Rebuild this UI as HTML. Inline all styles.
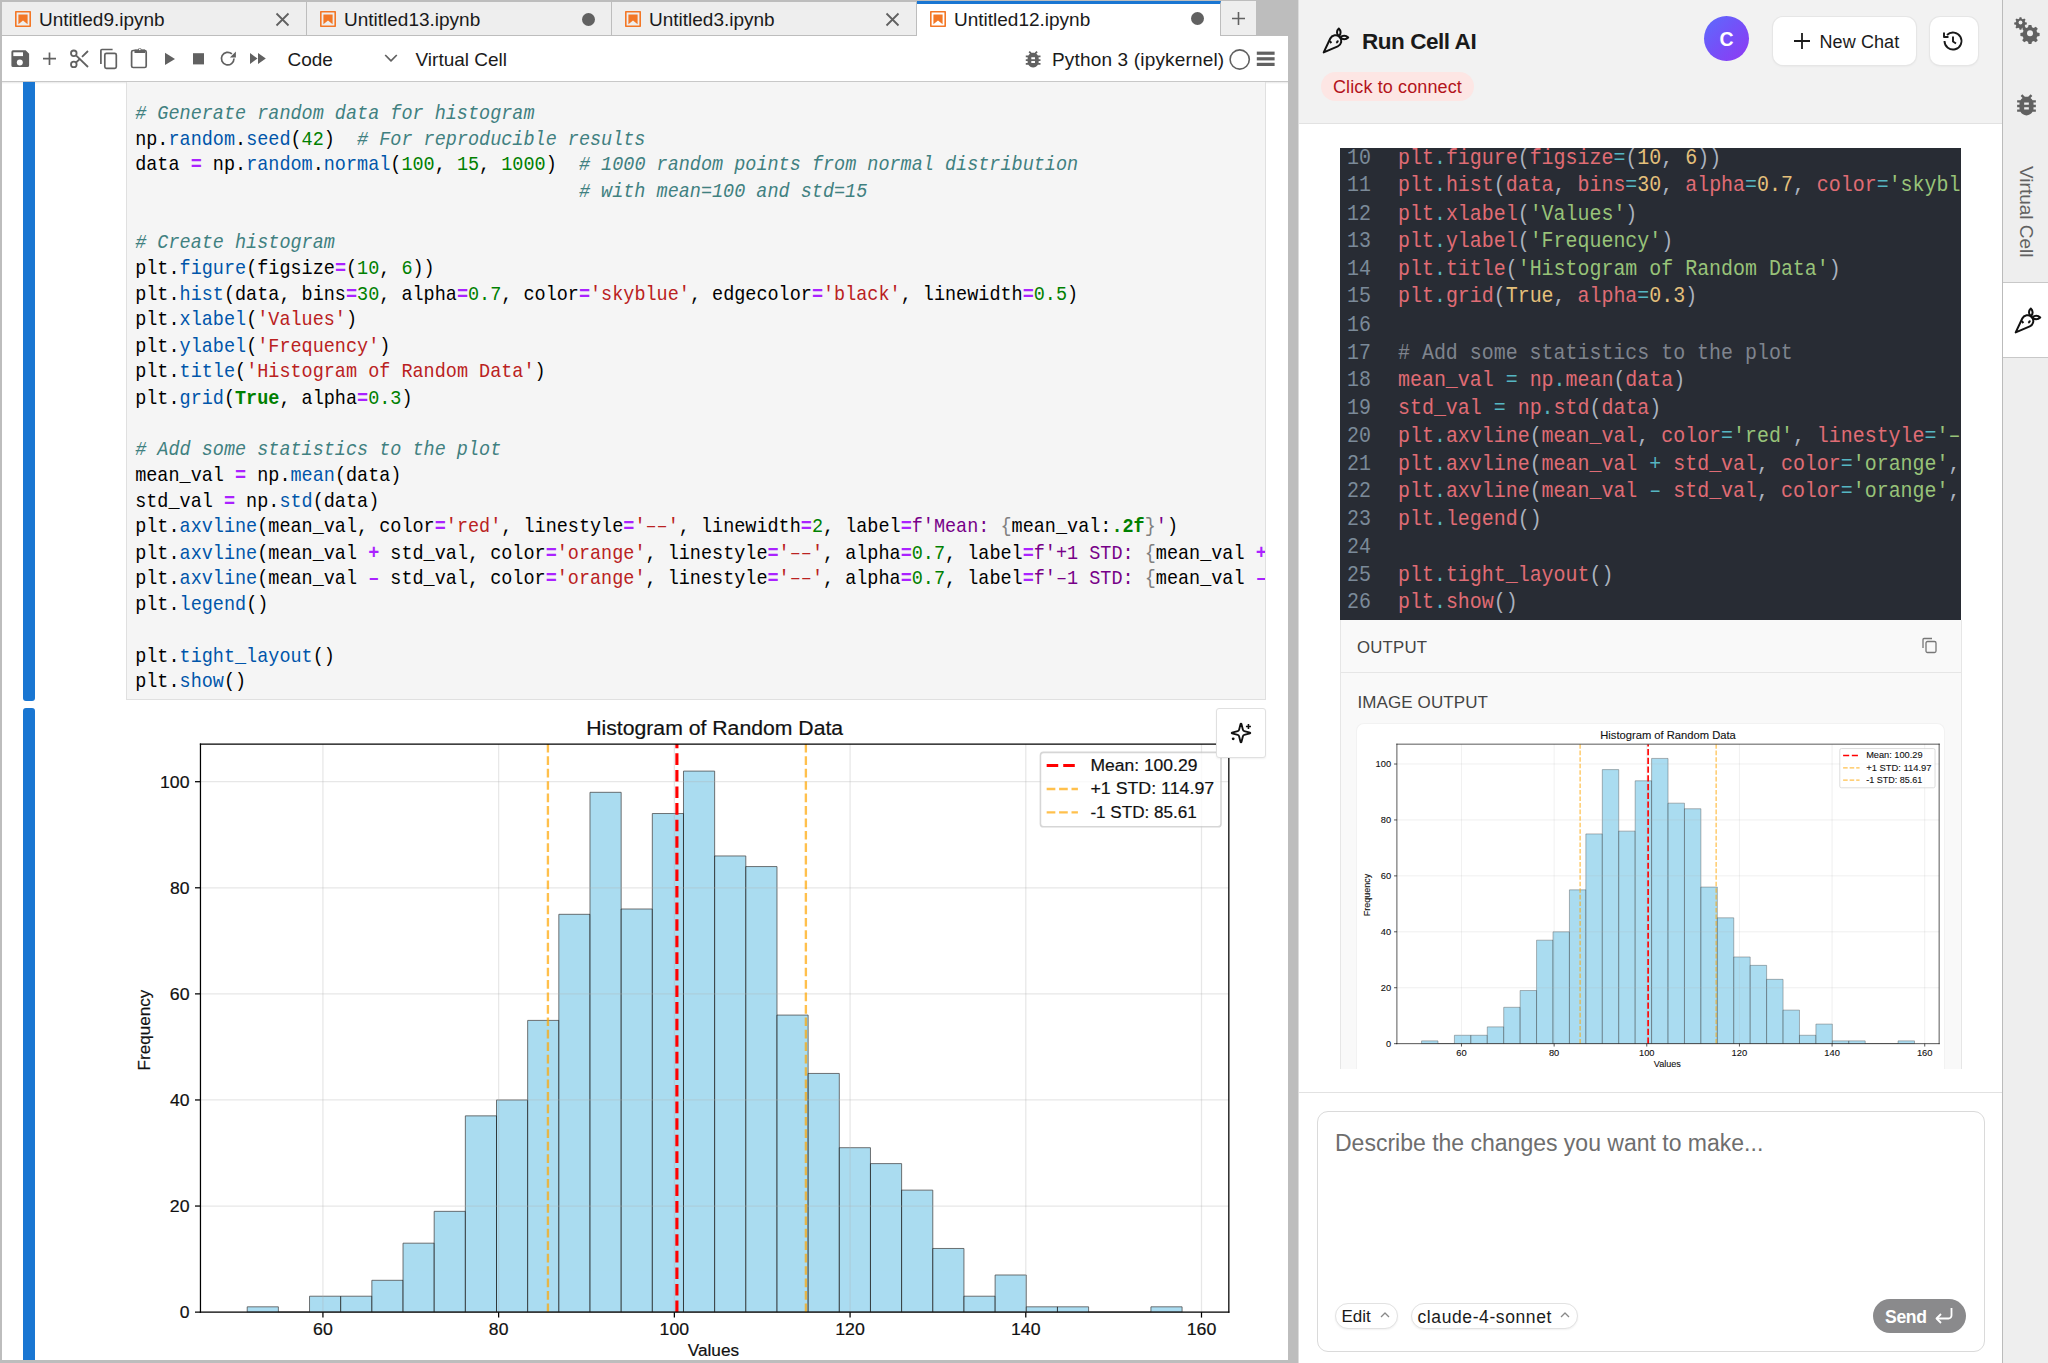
<!DOCTYPE html>
<html><head><meta charset="utf-8">
<style>
*{box-sizing:border-box}
html,body{margin:0;padding:0}
body{width:2048px;height:1363px;position:relative;overflow:hidden;background:#bdbdbd;font-family:"Liberation Sans",sans-serif;color:#1f1f1f}
.abs{position:absolute}
.tab{position:absolute;top:2px;height:34px;background:#eeeeee;border-right:1px solid #bdbdbd;border-bottom:1px solid #bdbdbd}
.tab .ico{position:absolute;left:13px;top:8.7px;width:16px;height:16px}
.tab .lbl{position:absolute;left:37px;top:7px;font-size:19px;line-height:22px;color:#1a1a1a;white-space:nowrap}
.tab .x{position:absolute;top:9.5px;width:15px;height:15px}
.tab .dot{position:absolute;top:11px;width:13px;height:13px;border-radius:50%;background:#616161}
.tb{position:absolute;top:36px;height:46px}
.code{position:absolute;left:135.5px;top:87px;font-family:"Liberation Mono",monospace;font-size:18.49px;line-height:23.523px;white-space:pre;color:#000;transform:scaleY(1.1);transform-origin:0 0}
.code i{font-style:italic;color:#408080}
.cm{font-style:italic;color:#408080}
.pr{color:#0055aa}
.nu{color:#008000}
.st{color:#ba2121}
.op{color:#aa22ff;font-weight:bold}
.kw{color:#008000;font-weight:bold}
.s2{color:#770088}
.br{color:#808080}
.rc{position:absolute;transform:scaleY(1.1);transform-origin:0 0;font-family:"Liberation Mono",monospace;font-size:19.95px;line-height:25.2727px;white-space:pre;color:#abb2bf}
.rc .n{color:#7b8a99}
.rc .v{color:#e06c75}
.rc .o{color:#56b6c2}
.rc .s{color:#98c379}
.rc .d{color:#e5c07b}
.rc .c{color:#7f848e}
</style></head>
<body>
<!-- LEFT NOTEBOOK PANEL -->
<div class="abs" style="left:2px;top:36px;width:1286px;height:1324px;background:#fff"></div>

<!-- tabs -->
<div class="tab" style="left:2px;width:305px">
  <svg class="ico" viewBox="0 0 16 16"><rect x=".8" y=".8" width="14.4" height="14.4" fill="none" stroke="#f37726" stroke-width="1.6"/><path d="M3.4 3.6h9.2v9.6l-4.6-3.7-4.6 3.7z" fill="#f37726"/></svg>
  <div class="lbl">Untitled9.ipynb</div>
  <svg class="x" style="left:273.2px" viewBox="0 0 15 15"><path d="M1.5 1.5L13.5 13.5M13.5 1.5L1.5 13.5" stroke="#616161" stroke-width="1.8"/></svg>
</div>
<div class="tab" style="left:307px;width:305px">
  <svg class="ico" viewBox="0 0 16 16"><rect x=".8" y=".8" width="14.4" height="14.4" fill="none" stroke="#f37726" stroke-width="1.6"/><path d="M3.4 3.6h9.2v9.6l-4.6-3.7-4.6 3.7z" fill="#f37726"/></svg>
  <div class="lbl">Untitled13.ipynb</div>
  <div class="dot" style="left:275px"></div>
</div>
<div class="tab" style="left:612px;width:305px">
  <svg class="ico" viewBox="0 0 16 16"><rect x=".8" y=".8" width="14.4" height="14.4" fill="none" stroke="#f37726" stroke-width="1.6"/><path d="M3.4 3.6h9.2v9.6l-4.6-3.7-4.6 3.7z" fill="#f37726"/></svg>
  <div class="lbl">Untitled3.ipynb</div>
  <svg class="x" style="left:273.2px" viewBox="0 0 15 15"><path d="M1.5 1.5L13.5 13.5M13.5 1.5L1.5 13.5" stroke="#616161" stroke-width="1.8"/></svg>
</div>
<div class="tab" style="left:917px;width:304px;background:#fff;border-bottom:none;height:35px;border-top:3px solid #1976d2;top:1px">
  <svg class="ico" style="top:7px" viewBox="0 0 16 16"><rect x=".8" y=".8" width="14.4" height="14.4" fill="none" stroke="#f37726" stroke-width="1.6"/><path d="M3.4 3.6h9.2v9.6l-4.6-3.7-4.6 3.7z" fill="#f37726"/></svg>
  <div class="lbl" style="top:5px">Untitled12.ipynb</div>
  <div class="dot" style="left:274px;top:8.3px"></div>
</div>
<div class="tab" style="left:1221px;width:36px;top:1px;height:35px">
  <svg class="abs" style="left:10px;top:10px" width="15" height="15" viewBox="0 0 15 15"><path d="M7.5 1V14M1 7.5H14" stroke="#616161" stroke-width="1.6"/></svg>
</div>

<div class="abs" style="left:2px;top:81px;width:1286px;height:1px;background:#c8c8c8"></div>
<div class="abs" style="left:2px;top:82px;width:1286px;height:2px;background:linear-gradient(#e8e8e8,#fff)"></div>
<svg class="abs" style="left:0;top:0" width="1288" height="82" viewBox="0 0 1288 82">
  <g fill="#616161" stroke="none">
    <!-- save -->
    <path d="M13 50.3h12.6l3.5 3.5v11.6a1.6 1.6 0 0 1-1.6 1.6H13a1.6 1.6 0 0 1-1.6-1.6V51.9a1.6 1.6 0 0 1 1.6-1.6z"/>
  </g>
  <rect x="13.3" y="52.3" width="9.7" height="3.8" fill="#fff"/>
  <circle cx="19.8" cy="62.5" r="3" fill="#fff"/>
  <!-- plus -->
  <path d="M49.5 52.5V65M43 58.7H56" stroke="#616161" stroke-width="1.7" fill="none"/>
  <!-- scissors -->
  <g stroke="#616161" fill="none" stroke-width="1.8">
    <circle cx="73.8" cy="53.3" r="2.8"/>
    <circle cx="73.8" cy="64.4" r="2.8"/>
    <path d="M76 55.3L88 67"/>
    <path d="M76 62.5L80.2 58.6M82 56.8L88 51"/>
  </g>
  <!-- copy -->
  <g stroke="#616161" fill="none" stroke-width="1.7">
    <path d="M100.9 64V50.5a1 1 0 0 1 1-1H112.6"/>
    <rect x="104.8" y="53.4" width="11.5" height="15" rx="1.6"/>
  </g>
  <!-- clipboard -->
  <g stroke="#616161" fill="none" stroke-width="1.7">
    <rect x="131.6" y="50.5" width="14.6" height="17" rx="1.6"/>
  </g>
  <path d="M134.5 49.6h3.6a1.7 1.7 0 0 1 3.4 0h3.6v3.3h-10.6z" fill="#616161"/>
  <circle cx="139.8" cy="49.3" r="0.9" fill="#fff"/>
  <!-- play -->
  <path d="M165 52.7L175 58.9L165 65.1z" fill="#616161"/>
  <!-- stop -->
  <rect x="193" y="53.2" width="11" height="11.2" fill="#616161"/>
  <!-- restart -->
  <path d="M234 58.6a6.3 6.3 0 1 1-2.1-4.7" stroke="#616161" stroke-width="1.7" fill="none"/>
  <path d="M235.9 51.6v6h-6z" fill="#616161"/>
  <!-- fast forward -->
  <path d="M250 53L257.5 58.5L250 64zM258 53L265.8 58.5L258 64z" fill="#616161"/>
  <!-- chevron -->
  <path d="M385.2 55L391 60.8L396.8 55" stroke="#616161" stroke-width="1.7" fill="none"/>
  <!-- bug -->
  <path transform="translate(1022.1 48.16) scale(0.92)" fill="#616161" d="M20 8h-2.81c-.45-.78-1.07-1.45-1.82-1.96L17 4.41 15.59 3l-2.17 2.17C12.96 5.06 12.49 5 12 5c-.49 0-.96.06-1.41.17L8.41 3 7 4.41l1.62 1.63C7.880 6.55 7.26 7.22 6.81 8H4v2h2.09c-.05.33-.09.66-.09 1v1H4v2h2v1c0 .34.04.67.09 1H4v2h2.81c1.04 1.79 2.97 3 5.19 3s4.15-1.21 5.19-3H20v-2h-2.09c.05-.33.09-.66.09-1v-1h2v-2h-2v-1c0-.34-.04-.67-.09-1H20V8zm-6 8h-4v-2h4v2zm0-4h-4v-2h4v2z"/>
  <!-- kernel circle -->
  <circle cx="1239.7" cy="59.5" r="9.6" stroke="#616161" stroke-width="1.6" fill="none"/>
  <!-- menu -->
  <g fill="#616161"><rect x="1256.8" y="51.6" width="17.8" height="3.2"/><rect x="1256.8" y="57.2" width="17.8" height="3.2"/><rect x="1256.8" y="62.8" width="17.8" height="3.2"/></g>
</svg>
<div class="abs" style="left:287.5px;top:49px;font-size:19px;line-height:22px;color:#1a1a1a">Code</div>
<div class="abs" style="left:415.5px;top:49px;font-size:19px;line-height:22px;color:#1a1a1a">Virtual Cell</div>
<div class="abs" style="left:1052px;top:49px;font-size:19px;line-height:22px;color:#1a1a1a;letter-spacing:0.17px">Python 3 (ipykernel)</div>

<div class="abs" style="left:23px;top:82px;width:12px;height:619px;background:#1976d2;border-radius:0 0 3px 3px"></div>
<div class="abs" style="left:23px;top:708px;width:12px;height:652px;background:#1976d2;border-radius:3px 3px 0 0"></div>
<div class="abs" style="left:126px;top:82px;width:1140px;height:617.7px;background:#f5f5f5;border:1px solid #e0e0e0;border-top:none;overflow:hidden">
<div class="code" style="left:8.2px;top:18.6px"><span class="cm"># Generate random data for histogram</span>
np.<span class="pr">random</span>.<span class="pr">seed</span>(<span class="nu">42</span>)  <span class="cm"># For reproducible results</span>
data <span class="op">=</span> np.<span class="pr">random</span>.<span class="pr">normal</span>(<span class="nu">100</span>, <span class="nu">15</span>, <span class="nu">1000</span>)  <span class="cm"># 1000 random points from normal distribution</span>
                                        <span class="cm"># with mean=100 and std=15</span>

<span class="cm"># Create histogram</span>
plt.<span class="pr">figure</span>(figsize<span class="op">=</span>(<span class="nu">10</span>, <span class="nu">6</span>))
plt.<span class="pr">hist</span>(data, bins<span class="op">=</span><span class="nu">30</span>, alpha<span class="op">=</span><span class="nu">0.7</span>, color<span class="op">=</span><span class="st">'skyblue'</span>, edgecolor<span class="op">=</span><span class="st">'black'</span>, linewidth<span class="op">=</span><span class="nu">0.5</span>)
plt.<span class="pr">xlabel</span>(<span class="st">'Values'</span>)
plt.<span class="pr">ylabel</span>(<span class="st">'Frequency'</span>)
plt.<span class="pr">title</span>(<span class="st">'Histogram of Random Data'</span>)
plt.<span class="pr">grid</span>(<span class="kw">True</span>, alpha<span class="op">=</span><span class="nu">0.3</span>)

<span class="cm"># Add some statistics to the plot</span>
mean_val <span class="op">=</span> np.<span class="pr">mean</span>(data)
std_val <span class="op">=</span> np.<span class="pr">std</span>(data)
plt.<span class="pr">axvline</span>(mean_val, color<span class="op">=</span><span class="st">'red'</span>, linestyle<span class="op">=</span><span class="st">'&#8211;&#8211;'</span>, linewidth<span class="op">=</span><span class="nu">2</span>, label<span class="op">=</span><span class="s2">f'Mean: </span><span class="br">{</span>mean_val:<span class="kw">.2f</span><span class="br">}</span><span class="s2">'</span>)
plt.<span class="pr">axvline</span>(mean_val <span class="op">+</span> std_val, color<span class="op">=</span><span class="st">'orange'</span>, linestyle<span class="op">=</span><span class="st">'&#8211;&#8211;'</span>, alpha<span class="op">=</span><span class="nu">0.7</span>, label<span class="op">=</span><span class="s2">f'+1 STD: </span><span class="br">{</span>mean_val <span class="op">+</span> std_val:<span class="kw">.2f</span><span class="br">}</span><span class="s2">'</span>)
plt.<span class="pr">axvline</span>(mean_val <span class="op">&#8211;</span> std_val, color<span class="op">=</span><span class="st">'orange'</span>, linestyle<span class="op">=</span><span class="st">'&#8211;&#8211;'</span>, alpha<span class="op">=</span><span class="nu">0.7</span>, label<span class="op">=</span><span class="s2">f'&#8211;1 STD: </span><span class="br">{</span>mean_val <span class="op">&#8211;</span> std_val:<span class="kw">.2f</span><span class="br">}</span><span class="s2">'</span>)
plt.<span class="pr">legend</span>()

plt.<span class="pr">tight_layout</span>()
plt.<span class="pr">show</span>()</div>
</div>
<div class="abs" style="left:2px;top:700.5px;width:1286px;height:659.5px;overflow:hidden">
<div class="abs" style="left:-2px;top:-700.5px;width:2048px;height:1363px">
<svg viewBox="0 0 720 432" preserveAspectRatio="none" width="1124.71" height="675.78" style="position:absolute;left:120.78px;top:702.05px;display:block">
<defs>
<style type="text/css">*{stroke-linejoin: round; stroke-linecap: butt}</style>
</defs>
<g id="bfigure_1">
<g id="bpatch_1">
<path d="M 0 432
L 720 432
L 720 0
L 0 0
z
" style="fill: none"/>
</g>
<g id="baxes_1">
<g id="bpatch_2">
<path d="M 50.87 390.04
L 709.2 390.04
L 709.2 26.88
L 50.87 26.88
z
" style="fill: #ffffff"/>
</g>
<g id="bpatch_3">
<path d="M 80.794091 390.04
L 100.743485 390.04
L 100.743485 386.64915
L 80.794091 386.64915
z
" clip-path="url(#bp0f57025803)" style="fill: #87ceeb; opacity: 0.7; stroke: #000000; stroke-width: 0.5; stroke-linejoin: miter"/>
</g>
<g id="bpatch_4">
<path d="M 100.743485 390.04
L 120.692879 390.04
L 120.692879 390.04
L 100.743485 390.04
z
" clip-path="url(#bp0f57025803)" style="fill: #87ceeb; opacity: 0.7; stroke: #000000; stroke-width: 0.5; stroke-linejoin: miter"/>
</g>
<g id="bpatch_5">
<path d="M 120.692879 390.04
L 140.642273 390.04
L 140.642273 379.867451
L 120.692879 379.867451
z
" clip-path="url(#bp0f57025803)" style="fill: #87ceeb; opacity: 0.7; stroke: #000000; stroke-width: 0.5; stroke-linejoin: miter"/>
</g>
<g id="bpatch_6">
<path d="M 140.642273 390.04
L 160.591667 390.04
L 160.591667 379.867451
L 140.642273 379.867451
z
" clip-path="url(#bp0f57025803)" style="fill: #87ceeb; opacity: 0.7; stroke: #000000; stroke-width: 0.5; stroke-linejoin: miter"/>
</g>
<g id="bpatch_7">
<path d="M 160.591667 390.04
L 180.541061 390.04
L 180.541061 369.694902
L 160.591667 369.694902
z
" clip-path="url(#bp0f57025803)" style="fill: #87ceeb; opacity: 0.7; stroke: #000000; stroke-width: 0.5; stroke-linejoin: miter"/>
</g>
<g id="bpatch_8">
<path d="M 180.541061 390.04
L 200.490455 390.04
L 200.490455 345.958954
L 180.541061 345.958954
z
" clip-path="url(#bp0f57025803)" style="fill: #87ceeb; opacity: 0.7; stroke: #000000; stroke-width: 0.5; stroke-linejoin: miter"/>
</g>
<g id="bpatch_9">
<path d="M 200.490455 390.04
L 220.439848 390.04
L 220.439848 325.613856
L 200.490455 325.613856
z
" clip-path="url(#bp0f57025803)" style="fill: #87ceeb; opacity: 0.7; stroke: #000000; stroke-width: 0.5; stroke-linejoin: miter"/>
</g>
<g id="bpatch_10">
<path d="M 220.439848 390.04
L 240.389242 390.04
L 240.389242 264.578562
L 220.439848 264.578562
z
" clip-path="url(#bp0f57025803)" style="fill: #87ceeb; opacity: 0.7; stroke: #000000; stroke-width: 0.5; stroke-linejoin: miter"/>
</g>
<g id="bpatch_11">
<path d="M 240.389242 390.04
L 260.338636 390.04
L 260.338636 254.406013
L 240.389242 254.406013
z
" clip-path="url(#bp0f57025803)" style="fill: #87ceeb; opacity: 0.7; stroke: #000000; stroke-width: 0.5; stroke-linejoin: miter"/>
</g>
<g id="bpatch_12">
<path d="M 260.338636 390.04
L 280.28803 390.04
L 280.28803 203.543268
L 260.338636 203.543268
z
" clip-path="url(#bp0f57025803)" style="fill: #87ceeb; opacity: 0.7; stroke: #000000; stroke-width: 0.5; stroke-linejoin: miter"/>
</g>
<g id="bpatch_13">
<path d="M 280.28803 390.04
L 300.237424 390.04
L 300.237424 135.726275
L 280.28803 135.726275
z
" clip-path="url(#bp0f57025803)" style="fill: #87ceeb; opacity: 0.7; stroke: #000000; stroke-width: 0.5; stroke-linejoin: miter"/>
</g>
<g id="bpatch_14">
<path d="M 300.237424 390.04
L 320.186818 390.04
L 320.186818 57.736732
L 300.237424 57.736732
z
" clip-path="url(#bp0f57025803)" style="fill: #87ceeb; opacity: 0.7; stroke: #000000; stroke-width: 0.5; stroke-linejoin: miter"/>
</g>
<g id="bpatch_15">
<path d="M 320.186818 390.04
L 340.136212 390.04
L 340.136212 132.335425
L 320.186818 132.335425
z
" clip-path="url(#bp0f57025803)" style="fill: #87ceeb; opacity: 0.7; stroke: #000000; stroke-width: 0.5; stroke-linejoin: miter"/>
</g>
<g id="bpatch_16">
<path d="M 340.136212 390.04
L 360.085606 390.04
L 360.085606 71.300131
L 340.136212 71.300131
z
" clip-path="url(#bp0f57025803)" style="fill: #87ceeb; opacity: 0.7; stroke: #000000; stroke-width: 0.5; stroke-linejoin: miter"/>
</g>
<g id="bpatch_17">
<path d="M 360.085606 390.04
L 380.035 390.04
L 380.035 44.173333
L 360.085606 44.173333
z
" clip-path="url(#bp0f57025803)" style="fill: #87ceeb; opacity: 0.7; stroke: #000000; stroke-width: 0.5; stroke-linejoin: miter"/>
</g>
<g id="bpatch_18">
<path d="M 380.035 390.04
L 399.984394 390.04
L 399.984394 98.426928
L 380.035 98.426928
z
" clip-path="url(#bp0f57025803)" style="fill: #87ceeb; opacity: 0.7; stroke: #000000; stroke-width: 0.5; stroke-linejoin: miter"/>
</g>
<g id="bpatch_19">
<path d="M 399.984394 390.04
L 419.933788 390.04
L 419.933788 105.208627
L 399.984394 105.208627
z
" clip-path="url(#bp0f57025803)" style="fill: #87ceeb; opacity: 0.7; stroke: #000000; stroke-width: 0.5; stroke-linejoin: miter"/>
</g>
<g id="bpatch_20">
<path d="M 419.933788 390.04
L 439.883182 390.04
L 439.883182 200.152418
L 419.933788 200.152418
z
" clip-path="url(#bp0f57025803)" style="fill: #87ceeb; opacity: 0.7; stroke: #000000; stroke-width: 0.5; stroke-linejoin: miter"/>
</g>
<g id="bpatch_21">
<path d="M 439.883182 390.04
L 459.832576 390.04
L 459.832576 237.451765
L 439.883182 237.451765
z
" clip-path="url(#bp0f57025803)" style="fill: #87ceeb; opacity: 0.7; stroke: #000000; stroke-width: 0.5; stroke-linejoin: miter"/>
</g>
<g id="bpatch_22">
<path d="M 459.832576 390.04
L 479.78197 390.04
L 479.78197 284.92366
L 459.832576 284.92366
z
" clip-path="url(#bp0f57025803)" style="fill: #87ceeb; opacity: 0.7; stroke: #000000; stroke-width: 0.5; stroke-linejoin: miter"/>
</g>
<g id="bpatch_23">
<path d="M 479.78197 390.04
L 499.731364 390.04
L 499.731364 295.096209
L 479.78197 295.096209
z
" clip-path="url(#bp0f57025803)" style="fill: #87ceeb; opacity: 0.7; stroke: #000000; stroke-width: 0.5; stroke-linejoin: miter"/>
</g>
<g id="bpatch_24">
<path d="M 499.731364 390.04
L 519.680758 390.04
L 519.680758 312.050458
L 499.731364 312.050458
z
" clip-path="url(#bp0f57025803)" style="fill: #87ceeb; opacity: 0.7; stroke: #000000; stroke-width: 0.5; stroke-linejoin: miter"/>
</g>
<g id="bpatch_25">
<path d="M 519.680758 390.04
L 539.630152 390.04
L 539.630152 349.349804
L 519.680758 349.349804
z
" clip-path="url(#bp0f57025803)" style="fill: #87ceeb; opacity: 0.7; stroke: #000000; stroke-width: 0.5; stroke-linejoin: miter"/>
</g>
<g id="bpatch_26">
<path d="M 539.630152 390.04
L 559.579545 390.04
L 559.579545 379.867451
L 539.630152 379.867451
z
" clip-path="url(#bp0f57025803)" style="fill: #87ceeb; opacity: 0.7; stroke: #000000; stroke-width: 0.5; stroke-linejoin: miter"/>
</g>
<g id="bpatch_27">
<path d="M 559.579545 390.04
L 579.528939 390.04
L 579.528939 366.304052
L 559.579545 366.304052
z
" clip-path="url(#bp0f57025803)" style="fill: #87ceeb; opacity: 0.7; stroke: #000000; stroke-width: 0.5; stroke-linejoin: miter"/>
</g>
<g id="bpatch_28">
<path d="M 579.528939 390.04
L 599.478333 390.04
L 599.478333 386.64915
L 579.528939 386.64915
z
" clip-path="url(#bp0f57025803)" style="fill: #87ceeb; opacity: 0.7; stroke: #000000; stroke-width: 0.5; stroke-linejoin: miter"/>
</g>
<g id="bpatch_29">
<path d="M 599.478333 390.04
L 619.427727 390.04
L 619.427727 386.64915
L 599.478333 386.64915
z
" clip-path="url(#bp0f57025803)" style="fill: #87ceeb; opacity: 0.7; stroke: #000000; stroke-width: 0.5; stroke-linejoin: miter"/>
</g>
<g id="bpatch_30">
<path d="M 619.427727 390.04
L 639.377121 390.04
L 639.377121 390.04
L 619.427727 390.04
z
" clip-path="url(#bp0f57025803)" style="fill: #87ceeb; opacity: 0.7; stroke: #000000; stroke-width: 0.5; stroke-linejoin: miter"/>
</g>
<g id="bpatch_31">
<path d="M 639.377121 390.04
L 659.326515 390.04
L 659.326515 390.04
L 639.377121 390.04
z
" clip-path="url(#bp0f57025803)" style="fill: #87ceeb; opacity: 0.7; stroke: #000000; stroke-width: 0.5; stroke-linejoin: miter"/>
</g>
<g id="bpatch_32">
<path d="M 659.326515 390.04
L 679.275909 390.04
L 679.275909 386.64915
L 659.326515 386.64915
z
" clip-path="url(#bp0f57025803)" style="fill: #87ceeb; opacity: 0.7; stroke: #000000; stroke-width: 0.5; stroke-linejoin: miter"/>
</g>
<g id="bmatplotlib.axis_1">
<g id="bxtick_1">
<g id="bline2d_1">
<path d="M 129.270002 390.04
L 129.270002 26.88
" clip-path="url(#bp0f57025803)" style="fill: none; stroke: #b0b0b0; stroke-opacity: 0.3; stroke-width: 0.8; stroke-linecap: square"/>
</g>
<g id="bline2d_2">
<defs>
<path id="bmb63c25f85a" d="M 0 0
L 0 3.5
" style="stroke: #000000; stroke-width: 0.8"/>
</defs>
<g>
<use xlink:href="#bmb63c25f85a" x="129.270002" y="390.04" style="stroke: #000000; stroke-width: 0.8"/>
</g>
</g>
<g id="btext_1">
<text style="font-size:10.3px;font-family:'Liberation Sans',sans-serif;text-anchor:middle;fill:#111;stroke:#111;stroke-width:0.12" textLength="12.62" lengthAdjust="spacingAndGlyphs" x="129.270002" y="404.638438" transform="rotate(-0 129.270002 404.638438)">60</text>
</g>
</g>
<g id="bxtick_2">
<g id="bline2d_3">
<path d="M 241.756031 390.04
L 241.756031 26.88
" clip-path="url(#bp0f57025803)" style="fill: none; stroke: #b0b0b0; stroke-opacity: 0.3; stroke-width: 0.8; stroke-linecap: square"/>
</g>
<g id="bline2d_4">
<g>
<use xlink:href="#bmb63c25f85a" x="241.756031" y="390.04" style="stroke: #000000; stroke-width: 0.8"/>
</g>
</g>
<g id="btext_2">
<text style="font-size:10.3px;font-family:'Liberation Sans',sans-serif;text-anchor:middle;fill:#111;stroke:#111;stroke-width:0.12" textLength="12.50" lengthAdjust="spacingAndGlyphs" x="241.756031" y="404.638438" transform="rotate(-0 241.756031 404.638438)">80</text>
</g>
</g>
<g id="bxtick_3">
<g id="bline2d_5">
<path d="M 354.24206 390.04
L 354.24206 26.88
" clip-path="url(#bp0f57025803)" style="fill: none; stroke: #b0b0b0; stroke-opacity: 0.3; stroke-width: 0.8; stroke-linecap: square"/>
</g>
<g id="bline2d_6">
<g>
<use xlink:href="#bmb63c25f85a" x="354.24206" y="390.04" style="stroke: #000000; stroke-width: 0.8"/>
</g>
</g>
<g id="btext_3">
<text style="font-size:10.3px;font-family:'Liberation Sans',sans-serif;text-anchor:middle;fill:#111;stroke:#111;stroke-width:0.12" textLength="18.88" lengthAdjust="spacingAndGlyphs" x="354.24206" y="404.638438" transform="rotate(-0 354.24206 404.638438)">100</text>
</g>
</g>
<g id="bxtick_4">
<g id="bline2d_7">
<path d="M 466.728089 390.04
L 466.728089 26.88
" clip-path="url(#bp0f57025803)" style="fill: none; stroke: #b0b0b0; stroke-opacity: 0.3; stroke-width: 0.8; stroke-linecap: square"/>
</g>
<g id="bline2d_8">
<g>
<use xlink:href="#bmb63c25f85a" x="466.728089" y="390.04" style="stroke: #000000; stroke-width: 0.8"/>
</g>
</g>
<g id="btext_4">
<text style="font-size:10.3px;font-family:'Liberation Sans',sans-serif;text-anchor:middle;fill:#111;stroke:#111;stroke-width:0.12" textLength="19.00" lengthAdjust="spacingAndGlyphs" x="466.728089" y="404.638438" transform="rotate(-0 466.728089 404.638438)">120</text>
</g>
</g>
<g id="bxtick_5">
<g id="bline2d_9">
<path d="M 579.214118 390.04
L 579.214118 26.88
" clip-path="url(#bp0f57025803)" style="fill: none; stroke: #b0b0b0; stroke-opacity: 0.3; stroke-width: 0.8; stroke-linecap: square"/>
</g>
<g id="bline2d_10">
<g>
<use xlink:href="#bmb63c25f85a" x="579.214118" y="390.04" style="stroke: #000000; stroke-width: 0.8"/>
</g>
</g>
<g id="btext_5">
<text style="font-size:10.3px;font-family:'Liberation Sans',sans-serif;text-anchor:middle;fill:#111;stroke:#111;stroke-width:0.12" textLength="18.88" lengthAdjust="spacingAndGlyphs" x="579.214118" y="404.638438" transform="rotate(-0 579.214118 404.638438)">140</text>
</g>
</g>
<g id="bxtick_6">
<g id="bline2d_11">
<path d="M 691.700146 390.04
L 691.700146 26.88
" clip-path="url(#bp0f57025803)" style="fill: none; stroke: #b0b0b0; stroke-opacity: 0.3; stroke-width: 0.8; stroke-linecap: square"/>
</g>
<g id="bline2d_12">
<g>
<use xlink:href="#bmb63c25f85a" x="691.700146" y="390.04" style="stroke: #000000; stroke-width: 0.8"/>
</g>
</g>
<g id="btext_6">
<text style="font-size:10.3px;font-family:'Liberation Sans',sans-serif;text-anchor:middle;fill:#111;stroke:#111;stroke-width:0.12" textLength="19.00" lengthAdjust="spacingAndGlyphs" x="691.700146" y="404.638438" transform="rotate(-0 691.700146 404.638438)">160</text>
</g>
</g>
<g id="btext_7">
<g transform="translate(-0.8 0)"><text style="font-size:10.3px;font-family:'Liberation Sans',sans-serif;text-anchor:middle;fill:#111;stroke:#111;stroke-width:0.12" textLength="32.88" lengthAdjust="spacingAndGlyphs" x="380.035" y="418.316562" transform="rotate(-0 380.035 418.316562)">Values</text></g>
</g>
</g>
<g id="bmatplotlib.axis_2">
<g id="bytick_1">
<g id="bline2d_13">
<path d="M 50.87 390.04
L 709.2 390.04
" clip-path="url(#bp0f57025803)" style="fill: none; stroke: #b0b0b0; stroke-opacity: 0.3; stroke-width: 0.8; stroke-linecap: square"/>
</g>
<g id="bline2d_14">
<defs>
<path id="bmf5bebd6162" d="M 0 0
L -3.5 0
" style="stroke: #000000; stroke-width: 0.8"/>
</defs>
<g>
<use xlink:href="#bmf5bebd6162" x="50.87" y="390.04" style="stroke: #000000; stroke-width: 0.8"/>
</g>
</g>
<g id="btext_8">
<text style="font-size:10.3px;font-family:'Liberation Sans',sans-serif;text-anchor:end;fill:#111;stroke:#111;stroke-width:0.12" textLength="6.25" lengthAdjust="spacingAndGlyphs" x="43.87" y="393.839219" transform="rotate(-0 43.87 393.839219)">0</text>
</g>
</g>
<g id="bytick_2">
<g id="bline2d_15">
<path d="M 50.87 322.223007
L 709.2 322.223007
" clip-path="url(#bp0f57025803)" style="fill: none; stroke: #b0b0b0; stroke-opacity: 0.3; stroke-width: 0.8; stroke-linecap: square"/>
</g>
<g id="bline2d_16">
<g>
<use xlink:href="#bmf5bebd6162" x="50.87" y="322.223007" style="stroke: #000000; stroke-width: 0.8"/>
</g>
</g>
<g id="btext_9">
<text style="font-size:10.3px;font-family:'Liberation Sans',sans-serif;text-anchor:end;fill:#111;stroke:#111;stroke-width:0.12" textLength="12.62" lengthAdjust="spacingAndGlyphs" x="43.87" y="326.022225" transform="rotate(-0 43.87 326.022225)">20</text>
</g>
</g>
<g id="bytick_3">
<g id="bline2d_17">
<path d="M 50.87 254.406013
L 709.2 254.406013
" clip-path="url(#bp0f57025803)" style="fill: none; stroke: #b0b0b0; stroke-opacity: 0.3; stroke-width: 0.8; stroke-linecap: square"/>
</g>
<g id="bline2d_18">
<g>
<use xlink:href="#bmf5bebd6162" x="50.87" y="254.406013" style="stroke: #000000; stroke-width: 0.8"/>
</g>
</g>
<g id="btext_10">
<text style="font-size:10.3px;font-family:'Liberation Sans',sans-serif;text-anchor:end;fill:#111;stroke:#111;stroke-width:0.12" textLength="12.50" lengthAdjust="spacingAndGlyphs" x="43.87" y="258.205232" transform="rotate(-0 43.87 258.205232)">40</text>
</g>
</g>
<g id="bytick_4">
<g id="bline2d_19">
<path d="M 50.87 186.58902
L 709.2 186.58902
" clip-path="url(#bp0f57025803)" style="fill: none; stroke: #b0b0b0; stroke-opacity: 0.3; stroke-width: 0.8; stroke-linecap: square"/>
</g>
<g id="bline2d_20">
<g>
<use xlink:href="#bmf5bebd6162" x="50.87" y="186.58902" style="stroke: #000000; stroke-width: 0.8"/>
</g>
</g>
<g id="btext_11">
<text style="font-size:10.3px;font-family:'Liberation Sans',sans-serif;text-anchor:end;fill:#111;stroke:#111;stroke-width:0.12" textLength="12.62" lengthAdjust="spacingAndGlyphs" x="43.87" y="190.388238" transform="rotate(-0 43.87 190.388238)">60</text>
</g>
</g>
<g id="bytick_5">
<g id="bline2d_21">
<path d="M 50.87 118.772026
L 709.2 118.772026
" clip-path="url(#bp0f57025803)" style="fill: none; stroke: #b0b0b0; stroke-opacity: 0.3; stroke-width: 0.8; stroke-linecap: square"/>
</g>
<g id="bline2d_22">
<g>
<use xlink:href="#bmf5bebd6162" x="50.87" y="118.772026" style="stroke: #000000; stroke-width: 0.8"/>
</g>
</g>
<g id="btext_12">
<text style="font-size:10.3px;font-family:'Liberation Sans',sans-serif;text-anchor:end;fill:#111;stroke:#111;stroke-width:0.12" textLength="12.50" lengthAdjust="spacingAndGlyphs" x="43.87" y="122.571245" transform="rotate(-0 43.87 122.571245)">80</text>
</g>
</g>
<g id="bytick_6">
<g id="bline2d_23">
<path d="M 50.87 50.955033
L 709.2 50.955033
" clip-path="url(#bp0f57025803)" style="fill: none; stroke: #b0b0b0; stroke-opacity: 0.3; stroke-width: 0.8; stroke-linecap: square"/>
</g>
<g id="bline2d_24">
<g>
<use xlink:href="#bmf5bebd6162" x="50.87" y="50.955033" style="stroke: #000000; stroke-width: 0.8"/>
</g>
</g>
<g id="btext_13">
<text style="font-size:10.3px;font-family:'Liberation Sans',sans-serif;text-anchor:end;fill:#111;stroke:#111;stroke-width:0.12" textLength="18.88" lengthAdjust="spacingAndGlyphs" x="43.87" y="54.754251" transform="rotate(-0 43.87 54.754251)">100</text>
</g>
</g>
<g id="btext_14">
<g transform="translate(0 1.3)"><text style="font-size:10.3px;font-family:'Liberation Sans',sans-serif;text-anchor:middle;fill:#111;stroke:#111;stroke-width:0.12" textLength="51.62" lengthAdjust="spacingAndGlyphs" x="18.702813" y="208.46" transform="rotate(-90 18.702813 208.46)">Frequency</text></g>
</g>
</g>
<g id="bline2d_25">
<path d="M 355.872999 390.04
L 355.872999 26.88
" clip-path="url(#bp0f57025803)" style="fill: none; stroke-dasharray: 7.4,3.2; stroke-dashoffset: 0; stroke: #ff0000; stroke-width: 2"/>
</g>
<g id="bline2d_26">
<path d="M 438.442768 390.04
L 438.442768 26.88
" clip-path="url(#bp0f57025803)" style="fill: none; stroke-dasharray: 5.55,2.4; stroke-dashoffset: 0; stroke: #ffa500; stroke-opacity: 0.7; stroke-width: 1.5"/>
</g>
<g id="bline2d_27">
<path d="M 273.303231 390.04
L 273.303231 26.88
" clip-path="url(#bp0f57025803)" style="fill: none; stroke-dasharray: 5.55,2.4; stroke-dashoffset: 0; stroke: #ffa500; stroke-opacity: 0.7; stroke-width: 1.5"/>
</g>
<g id="bpatch_33">
<path d="M 50.87 390.04
L 50.87 26.88
" style="fill: none; stroke: #000000; stroke-width: 0.8; stroke-linejoin: miter; stroke-linecap: square"/>
</g>
<g id="bpatch_34">
<path d="M 709.2 390.04
L 709.2 26.88
" style="fill: none; stroke: #000000; stroke-width: 0.8; stroke-linejoin: miter; stroke-linecap: square"/>
</g>
<g id="bpatch_35">
<path d="M 50.87 390.04
L 709.2 390.04
" style="fill: none; stroke: #000000; stroke-width: 0.8; stroke-linejoin: miter; stroke-linecap: square"/>
</g>
<g id="bpatch_36">
<path d="M 50.87 26.88
L 709.2 26.88
" style="fill: none; stroke: #000000; stroke-width: 0.8; stroke-linejoin: miter; stroke-linecap: square"/>
</g>
<g id="btext_15">
<text style="font-size:12.36px;font-family:'Liberation Sans',sans-serif;text-anchor:middle;fill:#111;stroke:#111;stroke-width:0.12" textLength="164.50" lengthAdjust="spacingAndGlyphs" x="380.035" y="20.88" transform="rotate(-0 380.035 20.88)">Histogram of Random Data</text>
</g>
<g id="blegend_1">
<g id="bpatch_37">
<path d="M 590.585938 79.8
L 702.2 79.8
Q 704.2 79.8 704.2 77.8
L 704.2 34.2
Q 704.2 32.2 702.2 32.2
L 590.585938 32.2
Q 588.585938 32.2 588.585938 34.2
L 588.585938 77.8
Q 588.585938 79.8 590.585938 79.8
z
" style="fill: #ffffff; opacity: 0.8; stroke: #cccccc; stroke-linejoin: miter"/>
</g>
<g id="bline2d_28" transform="translate(0 0.64)">
<path d="M 592.585938 39.978437
L 602.585938 39.978437
L 612.585938 39.978437
" style="fill: none; stroke-dasharray: 7.4,3.2; stroke-dashoffset: 0; stroke: #ff0000; stroke-width: 2"/>
</g>
<g id="btext_16" transform="translate(0 0.64)">
<text style="font-size:10.3px;font-family:'Liberation Sans',sans-serif;text-anchor:start;fill:#111;stroke:#111;stroke-width:0.12" textLength="68.50" lengthAdjust="spacingAndGlyphs" x="620.585938" y="43.478437" transform="rotate(-0 620.585938 43.478437)">Mean: 100.29</text>
</g>
<g id="bline2d_29" transform="translate(0 0.94)">
<path d="M 592.585938 54.656563
L 602.585938 54.656563
L 612.585938 54.656563
" style="fill: none; stroke-dasharray: 5.55,2.4; stroke-dashoffset: 0; stroke: #ffa500; stroke-opacity: 0.7; stroke-width: 1.5"/>
</g>
<g id="btext_17" transform="translate(0 0.94)">
<text style="font-size:10.3px;font-family:'Liberation Sans',sans-serif;text-anchor:start;fill:#111;stroke:#111;stroke-width:0.12" textLength="79.25" lengthAdjust="spacingAndGlyphs" x="620.585938" y="58.156563" transform="rotate(-0 620.585938 58.156563)">+1 STD: 114.97</text>
</g>
<g id="bline2d_30" transform="translate(0 1.24)">
<path d="M 592.585938 69.334687
L 602.585938 69.334687
L 612.585938 69.334687
" style="fill: none; stroke-dasharray: 5.55,2.4; stroke-dashoffset: 0; stroke: #ffa500; stroke-opacity: 0.7; stroke-width: 1.5"/>
</g>
<g id="btext_18" transform="translate(0 1.24)">
<text style="font-size:10.3px;font-family:'Liberation Sans',sans-serif;text-anchor:start;fill:#111;stroke:#111;stroke-width:0.12" textLength="68.12" lengthAdjust="spacingAndGlyphs" x="620.585938" y="72.834687" transform="rotate(-0 620.585938 72.834687)">-1 STD: 85.61</text>
</g>
</g>
</g>
</g>
<defs>
<clipPath id="bp0f57025803">
<rect x="50.87" y="26.88" width="658.33" height="363.16"/>
</clipPath>
</defs>
</svg>

</div>
</div>
<div class="abs" style="left:1216px;top:708px;width:50px;height:50px;background:#fff;border:1px solid #e0e0e0;border-radius:3px;box-shadow:0 1px 2px rgba(0,0,0,0.06)">
  <svg class="abs" style="left:12px;top:12px" width="24" height="24" viewBox="0 0 24 24"><g transform="translate(12 12) scale(0.93) translate(-12 -12)" stroke="#111" stroke-width="2" fill="none" stroke-linecap="round" stroke-linejoin="round"><path d="M9.937 15.5A2 2 0 0 0 8.5 14.063l-6.135-1.582a.5.5 0 0 1 0-.962L8.5 9.936A2 2 0 0 0 9.937 8.5l1.582-6.135a.5.5 0 0 1 .963 0L14.063 8.5A2 2 0 0 0 15.5 9.937l6.135 1.581a.5.5 0 0 1 0 .964L15.5 14.063a2 2 0 0 0-1.437 1.437l-1.582 6.135a.5.5 0 0 1-.963 0z"/><path d="M20 2.4v5.4M22.7 5.1h-5.4" stroke-width="1.7" stroke-linecap="butt"/></g><circle cx="4.2" cy="17.8" r="1.4" fill="#111"/></svg>
</div>

<div class="abs" style="left:1298px;top:0;width:705px;height:1363px;background:#fff;border-left:1px solid #dcdcdc"></div>
<div class="abs" style="left:1299px;top:0;width:704px;height:124px;background:#f2f2f2;border-bottom:1px solid #e2e2e2"></div>
<!-- carrot -->
<svg class="abs" style="left:1320px;top:26px" width="30" height="30" viewBox="0 0 30 30">
  <g stroke="#111" stroke-width="2" fill="none" stroke-linejoin="round" stroke-linecap="round">
    <path d="M3.7 26.4L10.26 12.53A5.8 5.8 0 1 1 17.79 20.33Z"/>
    <path d="M18.8 2.6C21 4.6 21.4 8 18.8 10.2C16.2 8 16.6 4.6 18.8 2.6Z"/>
    <path d="M20.3 11.5C22.3 9.2 26 9.2 28.2 11.5C26 13.8 22.3 13.8 20.3 11.5Z"/>
    <path d="M9.8 15.2L11.4 17M16.3 16.9Q17.6 16 18 14.4"/>
  </g>
</svg>
<div class="abs" style="left:1362px;top:30.4px;font-size:22.5px;line-height:24px;font-weight:bold;color:#1a1a1a;letter-spacing:-0.45px">Run Cell AI</div>
<div class="abs" style="left:1321px;top:72px;width:153px;height:29px;border-radius:14.5px;background:#fde6e4"></div>
<div class="abs" style="left:1333px;top:77px;font-size:18px;line-height:20px;color:#b3141b;letter-spacing:0.12px">Click to connect</div>
<!-- avatar -->
<div class="abs" style="left:1704px;top:16px;width:45px;height:45px;border-radius:50%;background:linear-gradient(135deg,#5c6cfd 0%,#7550f8 50%,#9039f3 100%)"></div>
<div class="abs" style="left:1704px;top:28px;width:45px;text-align:center;font-size:19.5px;line-height:22px;font-weight:bold;color:#fff">C</div>
<!-- new chat -->
<div class="abs" style="left:1773px;top:17px;width:142.5px;height:48px;border-radius:10px;background:#fff;box-shadow:0 0 0 1px #e6e6e6,0 1px 3px rgba(0,0,0,0.08)"></div>
<svg class="abs" style="left:1793px;top:32px" width="18" height="18" viewBox="0 0 18 18"><path d="M9 1V17M1 9H17" stroke="#1a1a1a" stroke-width="1.8"/></svg>
<div class="abs" style="left:1819.5px;top:31px;font-size:18px;line-height:22px;color:#1a1a1a;letter-spacing:0.1px">New Chat</div>
<div class="abs" style="left:1929.5px;top:17px;width:48.5px;height:48px;border-radius:10px;background:#fff;box-shadow:0 0 0 1px #e6e6e6,0 1px 3px rgba(0,0,0,0.08)"></div>
<svg class="abs" style="left:1941px;top:29px" width="24" height="24" viewBox="0 0 24 24"><g stroke="#1a1a1a" stroke-width="1.9" fill="none" stroke-linecap="round" stroke-linejoin="round"><path d="M3.5 12a8.5 8.5 0 1 0 2.5-6"/><path d="M3 3.5v4.5h4.5"/><path d="M12 7.5v5l3 2"/></g></svg>

<!-- code block -->
<div class="abs" style="left:1340px;top:148px;width:621px;height:472px;background:#282c34;overflow:hidden">
<div class="rc" style="left:0px;top:-3.75px;width:31px;text-align:right"><span class="n">10
11
12
13
14
15
16
17
18
19
20
21
22
23
24
25
26</span></div>
<div class="rc" style="left:58px;top:-3.75px"><span class="v">plt</span><span class="o">.</span><span class="v">figure</span>(<span class="v">figsize</span><span class="o">=</span>(<span class="d">10</span>, <span class="d">6</span>))
<span class="v">plt</span><span class="o">.</span><span class="v">hist</span>(<span class="v">data</span>, <span class="v">bins</span><span class="o">=</span><span class="d">30</span>, <span class="v">alpha</span><span class="o">=</span><span class="d">0.7</span>, <span class="v">color</span><span class="o">=</span><span class="s">'skyblue'</span>, <span class="v">edgecolor</span><span class="o">=</span><span class="s">'black'</span>
<span class="v">plt</span><span class="o">.</span><span class="v">xlabel</span>(<span class="s">'Values'</span>)
<span class="v">plt</span><span class="o">.</span><span class="v">ylabel</span>(<span class="s">'Frequency'</span>)
<span class="v">plt</span><span class="o">.</span><span class="v">title</span>(<span class="s">'Histogram of Random Data'</span>)
<span class="v">plt</span><span class="o">.</span><span class="v">grid</span>(<span class="d">True</span>, <span class="v">alpha</span><span class="o">=</span><span class="d">0.3</span>)

<span class="c"># Add some statistics to the plot</span>
<span class="v">mean_val</span> <span class="o">=</span> <span class="v">np</span><span class="o">.</span><span class="v">mean</span>(<span class="v">data</span>)
<span class="v">std_val</span> <span class="o">=</span> <span class="v">np</span><span class="o">.</span><span class="v">std</span>(<span class="v">data</span>)
<span class="v">plt</span><span class="o">.</span><span class="v">axvline</span>(<span class="v">mean_val</span>, <span class="v">color</span><span class="o">=</span><span class="s">'red'</span>, <span class="v">linestyle</span><span class="o">=</span><span class="s">'&#8211;&#8211;'</span>
<span class="v">plt</span><span class="o">.</span><span class="v">axvline</span>(<span class="v">mean_val</span> <span class="o">+</span> <span class="v">std_val</span>, <span class="v">color</span><span class="o">=</span><span class="s">'orange'</span>, <span class="v">linestyle</span>
<span class="v">plt</span><span class="o">.</span><span class="v">axvline</span>(<span class="v">mean_val</span> <span class="o">&#8211;</span> <span class="v">std_val</span>, <span class="v">color</span><span class="o">=</span><span class="s">'orange'</span>, <span class="v">linestyle</span>
<span class="v">plt</span><span class="o">.</span><span class="v">legend</span>()

<span class="v">plt</span><span class="o">.</span><span class="v">tight_layout</span>()
<span class="v">plt</span><span class="o">.</span><span class="v">show</span>()</div>
</div>
<!-- output header -->
<div class="abs" style="left:1339.5px;top:620px;width:622px;height:53px;background:#f9f9f9;border:1px solid #e6e6e6;border-top:none"></div>
<div class="abs" style="left:1357px;top:637.7px;font-size:16.8px;line-height:20px;color:#444;letter-spacing:0.2px">OUTPUT</div>
<svg class="abs" style="left:1920px;top:636px" width="20" height="20" viewBox="0 0 20 20"><g stroke="#777" stroke-width="1.3" fill="none"><path d="M3 12V3.5a1 1 0 0 1 1-1h8"/><rect x="6" y="5.5" width="10" height="11" rx="1.5"/></g></svg>
<div class="abs" style="left:1339.5px;top:673px;width:622px;height:396px;background:#f9f9f9;border-left:1px solid #e6e6e6;border-right:1px solid #e6e6e6;overflow:hidden">
  <div class="abs" style="left:17px;top:19.8px;font-size:17px;line-height:20px;color:#444;letter-spacing:0.1px">IMAGE OUTPUT</div>
  <div class="abs" style="left:16.5px;top:50.6px;width:587px;height:400px;background:#fff;border-radius:7px;box-shadow:0 0 0 1px #f2f2f2"></div>
  <div class="abs" style="left:-1339.5px;top:-673px;width:2048px;height:1363px">
<svg viewBox="0 0 720 432" preserveAspectRatio="none" width="593.06" height="356.27" style="position:absolute;left:1353.75px;top:722.00px;display:block">
<defs>
<style type="text/css">*{stroke-linejoin: round; stroke-linecap: butt}</style>
</defs>
<g id="sfigure_1">
<g id="spatch_1">
<path d="M 0 432
L 720 432
L 720 0
L 0 0
z
" style="fill: none"/>
</g>
<g id="saxes_1">
<g id="spatch_2">
<path d="M 50.87 390.04
L 709.2 390.04
L 709.2 26.88
L 50.87 26.88
z
" style="fill: #ffffff"/>
</g>
<g id="spatch_3">
<path d="M 80.794091 390.04
L 100.743485 390.04
L 100.743485 386.64915
L 80.794091 386.64915
z
" clip-path="url(#sp0f57025803)" style="fill: #87ceeb; opacity: 0.7; stroke: #000000; stroke-width: 0.5; stroke-linejoin: miter"/>
</g>
<g id="spatch_4">
<path d="M 100.743485 390.04
L 120.692879 390.04
L 120.692879 390.04
L 100.743485 390.04
z
" clip-path="url(#sp0f57025803)" style="fill: #87ceeb; opacity: 0.7; stroke: #000000; stroke-width: 0.5; stroke-linejoin: miter"/>
</g>
<g id="spatch_5">
<path d="M 120.692879 390.04
L 140.642273 390.04
L 140.642273 379.867451
L 120.692879 379.867451
z
" clip-path="url(#sp0f57025803)" style="fill: #87ceeb; opacity: 0.7; stroke: #000000; stroke-width: 0.5; stroke-linejoin: miter"/>
</g>
<g id="spatch_6">
<path d="M 140.642273 390.04
L 160.591667 390.04
L 160.591667 379.867451
L 140.642273 379.867451
z
" clip-path="url(#sp0f57025803)" style="fill: #87ceeb; opacity: 0.7; stroke: #000000; stroke-width: 0.5; stroke-linejoin: miter"/>
</g>
<g id="spatch_7">
<path d="M 160.591667 390.04
L 180.541061 390.04
L 180.541061 369.694902
L 160.591667 369.694902
z
" clip-path="url(#sp0f57025803)" style="fill: #87ceeb; opacity: 0.7; stroke: #000000; stroke-width: 0.5; stroke-linejoin: miter"/>
</g>
<g id="spatch_8">
<path d="M 180.541061 390.04
L 200.490455 390.04
L 200.490455 345.958954
L 180.541061 345.958954
z
" clip-path="url(#sp0f57025803)" style="fill: #87ceeb; opacity: 0.7; stroke: #000000; stroke-width: 0.5; stroke-linejoin: miter"/>
</g>
<g id="spatch_9">
<path d="M 200.490455 390.04
L 220.439848 390.04
L 220.439848 325.613856
L 200.490455 325.613856
z
" clip-path="url(#sp0f57025803)" style="fill: #87ceeb; opacity: 0.7; stroke: #000000; stroke-width: 0.5; stroke-linejoin: miter"/>
</g>
<g id="spatch_10">
<path d="M 220.439848 390.04
L 240.389242 390.04
L 240.389242 264.578562
L 220.439848 264.578562
z
" clip-path="url(#sp0f57025803)" style="fill: #87ceeb; opacity: 0.7; stroke: #000000; stroke-width: 0.5; stroke-linejoin: miter"/>
</g>
<g id="spatch_11">
<path d="M 240.389242 390.04
L 260.338636 390.04
L 260.338636 254.406013
L 240.389242 254.406013
z
" clip-path="url(#sp0f57025803)" style="fill: #87ceeb; opacity: 0.7; stroke: #000000; stroke-width: 0.5; stroke-linejoin: miter"/>
</g>
<g id="spatch_12">
<path d="M 260.338636 390.04
L 280.28803 390.04
L 280.28803 203.543268
L 260.338636 203.543268
z
" clip-path="url(#sp0f57025803)" style="fill: #87ceeb; opacity: 0.7; stroke: #000000; stroke-width: 0.5; stroke-linejoin: miter"/>
</g>
<g id="spatch_13">
<path d="M 280.28803 390.04
L 300.237424 390.04
L 300.237424 135.726275
L 280.28803 135.726275
z
" clip-path="url(#sp0f57025803)" style="fill: #87ceeb; opacity: 0.7; stroke: #000000; stroke-width: 0.5; stroke-linejoin: miter"/>
</g>
<g id="spatch_14">
<path d="M 300.237424 390.04
L 320.186818 390.04
L 320.186818 57.736732
L 300.237424 57.736732
z
" clip-path="url(#sp0f57025803)" style="fill: #87ceeb; opacity: 0.7; stroke: #000000; stroke-width: 0.5; stroke-linejoin: miter"/>
</g>
<g id="spatch_15">
<path d="M 320.186818 390.04
L 340.136212 390.04
L 340.136212 132.335425
L 320.186818 132.335425
z
" clip-path="url(#sp0f57025803)" style="fill: #87ceeb; opacity: 0.7; stroke: #000000; stroke-width: 0.5; stroke-linejoin: miter"/>
</g>
<g id="spatch_16">
<path d="M 340.136212 390.04
L 360.085606 390.04
L 360.085606 71.300131
L 340.136212 71.300131
z
" clip-path="url(#sp0f57025803)" style="fill: #87ceeb; opacity: 0.7; stroke: #000000; stroke-width: 0.5; stroke-linejoin: miter"/>
</g>
<g id="spatch_17">
<path d="M 360.085606 390.04
L 380.035 390.04
L 380.035 44.173333
L 360.085606 44.173333
z
" clip-path="url(#sp0f57025803)" style="fill: #87ceeb; opacity: 0.7; stroke: #000000; stroke-width: 0.5; stroke-linejoin: miter"/>
</g>
<g id="spatch_18">
<path d="M 380.035 390.04
L 399.984394 390.04
L 399.984394 98.426928
L 380.035 98.426928
z
" clip-path="url(#sp0f57025803)" style="fill: #87ceeb; opacity: 0.7; stroke: #000000; stroke-width: 0.5; stroke-linejoin: miter"/>
</g>
<g id="spatch_19">
<path d="M 399.984394 390.04
L 419.933788 390.04
L 419.933788 105.208627
L 399.984394 105.208627
z
" clip-path="url(#sp0f57025803)" style="fill: #87ceeb; opacity: 0.7; stroke: #000000; stroke-width: 0.5; stroke-linejoin: miter"/>
</g>
<g id="spatch_20">
<path d="M 419.933788 390.04
L 439.883182 390.04
L 439.883182 200.152418
L 419.933788 200.152418
z
" clip-path="url(#sp0f57025803)" style="fill: #87ceeb; opacity: 0.7; stroke: #000000; stroke-width: 0.5; stroke-linejoin: miter"/>
</g>
<g id="spatch_21">
<path d="M 439.883182 390.04
L 459.832576 390.04
L 459.832576 237.451765
L 439.883182 237.451765
z
" clip-path="url(#sp0f57025803)" style="fill: #87ceeb; opacity: 0.7; stroke: #000000; stroke-width: 0.5; stroke-linejoin: miter"/>
</g>
<g id="spatch_22">
<path d="M 459.832576 390.04
L 479.78197 390.04
L 479.78197 284.92366
L 459.832576 284.92366
z
" clip-path="url(#sp0f57025803)" style="fill: #87ceeb; opacity: 0.7; stroke: #000000; stroke-width: 0.5; stroke-linejoin: miter"/>
</g>
<g id="spatch_23">
<path d="M 479.78197 390.04
L 499.731364 390.04
L 499.731364 295.096209
L 479.78197 295.096209
z
" clip-path="url(#sp0f57025803)" style="fill: #87ceeb; opacity: 0.7; stroke: #000000; stroke-width: 0.5; stroke-linejoin: miter"/>
</g>
<g id="spatch_24">
<path d="M 499.731364 390.04
L 519.680758 390.04
L 519.680758 312.050458
L 499.731364 312.050458
z
" clip-path="url(#sp0f57025803)" style="fill: #87ceeb; opacity: 0.7; stroke: #000000; stroke-width: 0.5; stroke-linejoin: miter"/>
</g>
<g id="spatch_25">
<path d="M 519.680758 390.04
L 539.630152 390.04
L 539.630152 349.349804
L 519.680758 349.349804
z
" clip-path="url(#sp0f57025803)" style="fill: #87ceeb; opacity: 0.7; stroke: #000000; stroke-width: 0.5; stroke-linejoin: miter"/>
</g>
<g id="spatch_26">
<path d="M 539.630152 390.04
L 559.579545 390.04
L 559.579545 379.867451
L 539.630152 379.867451
z
" clip-path="url(#sp0f57025803)" style="fill: #87ceeb; opacity: 0.7; stroke: #000000; stroke-width: 0.5; stroke-linejoin: miter"/>
</g>
<g id="spatch_27">
<path d="M 559.579545 390.04
L 579.528939 390.04
L 579.528939 366.304052
L 559.579545 366.304052
z
" clip-path="url(#sp0f57025803)" style="fill: #87ceeb; opacity: 0.7; stroke: #000000; stroke-width: 0.5; stroke-linejoin: miter"/>
</g>
<g id="spatch_28">
<path d="M 579.528939 390.04
L 599.478333 390.04
L 599.478333 386.64915
L 579.528939 386.64915
z
" clip-path="url(#sp0f57025803)" style="fill: #87ceeb; opacity: 0.7; stroke: #000000; stroke-width: 0.5; stroke-linejoin: miter"/>
</g>
<g id="spatch_29">
<path d="M 599.478333 390.04
L 619.427727 390.04
L 619.427727 386.64915
L 599.478333 386.64915
z
" clip-path="url(#sp0f57025803)" style="fill: #87ceeb; opacity: 0.7; stroke: #000000; stroke-width: 0.5; stroke-linejoin: miter"/>
</g>
<g id="spatch_30">
<path d="M 619.427727 390.04
L 639.377121 390.04
L 639.377121 390.04
L 619.427727 390.04
z
" clip-path="url(#sp0f57025803)" style="fill: #87ceeb; opacity: 0.7; stroke: #000000; stroke-width: 0.5; stroke-linejoin: miter"/>
</g>
<g id="spatch_31">
<path d="M 639.377121 390.04
L 659.326515 390.04
L 659.326515 390.04
L 639.377121 390.04
z
" clip-path="url(#sp0f57025803)" style="fill: #87ceeb; opacity: 0.7; stroke: #000000; stroke-width: 0.5; stroke-linejoin: miter"/>
</g>
<g id="spatch_32">
<path d="M 659.326515 390.04
L 679.275909 390.04
L 679.275909 386.64915
L 659.326515 386.64915
z
" clip-path="url(#sp0f57025803)" style="fill: #87ceeb; opacity: 0.7; stroke: #000000; stroke-width: 0.5; stroke-linejoin: miter"/>
</g>
<g id="smatplotlib.axis_1">
<g id="sxtick_1">
<g id="sline2d_1">
<path d="M 129.270002 390.04
L 129.270002 26.88
" clip-path="url(#sp0f57025803)" style="fill: none; stroke: #b0b0b0; stroke-opacity: 0.3; stroke-width: 0.8; stroke-linecap: square"/>
</g>
<g id="sline2d_2">
<defs>
<path id="smb63c25f85a" d="M 0 0
L 0 3.5
" style="stroke: #000000; stroke-width: 0.8"/>
</defs>
<g>
<use xlink:href="#smb63c25f85a" x="129.270002" y="390.04" style="stroke: #000000; stroke-width: 0.8"/>
</g>
</g>
<g id="stext_1">
<text style="font-size:10.3px;font-family:'Liberation Sans',sans-serif;text-anchor:middle;fill:#111;stroke:#111;stroke-width:0.12" textLength="12.62" lengthAdjust="spacingAndGlyphs" x="129.270002" y="404.638438" transform="rotate(-0 129.270002 404.638438)">60</text>
</g>
</g>
<g id="sxtick_2">
<g id="sline2d_3">
<path d="M 241.756031 390.04
L 241.756031 26.88
" clip-path="url(#sp0f57025803)" style="fill: none; stroke: #b0b0b0; stroke-opacity: 0.3; stroke-width: 0.8; stroke-linecap: square"/>
</g>
<g id="sline2d_4">
<g>
<use xlink:href="#smb63c25f85a" x="241.756031" y="390.04" style="stroke: #000000; stroke-width: 0.8"/>
</g>
</g>
<g id="stext_2">
<text style="font-size:10.3px;font-family:'Liberation Sans',sans-serif;text-anchor:middle;fill:#111;stroke:#111;stroke-width:0.12" textLength="12.50" lengthAdjust="spacingAndGlyphs" x="241.756031" y="404.638438" transform="rotate(-0 241.756031 404.638438)">80</text>
</g>
</g>
<g id="sxtick_3">
<g id="sline2d_5">
<path d="M 354.24206 390.04
L 354.24206 26.88
" clip-path="url(#sp0f57025803)" style="fill: none; stroke: #b0b0b0; stroke-opacity: 0.3; stroke-width: 0.8; stroke-linecap: square"/>
</g>
<g id="sline2d_6">
<g>
<use xlink:href="#smb63c25f85a" x="354.24206" y="390.04" style="stroke: #000000; stroke-width: 0.8"/>
</g>
</g>
<g id="stext_3">
<text style="font-size:10.3px;font-family:'Liberation Sans',sans-serif;text-anchor:middle;fill:#111;stroke:#111;stroke-width:0.12" textLength="18.88" lengthAdjust="spacingAndGlyphs" x="354.24206" y="404.638438" transform="rotate(-0 354.24206 404.638438)">100</text>
</g>
</g>
<g id="sxtick_4">
<g id="sline2d_7">
<path d="M 466.728089 390.04
L 466.728089 26.88
" clip-path="url(#sp0f57025803)" style="fill: none; stroke: #b0b0b0; stroke-opacity: 0.3; stroke-width: 0.8; stroke-linecap: square"/>
</g>
<g id="sline2d_8">
<g>
<use xlink:href="#smb63c25f85a" x="466.728089" y="390.04" style="stroke: #000000; stroke-width: 0.8"/>
</g>
</g>
<g id="stext_4">
<text style="font-size:10.3px;font-family:'Liberation Sans',sans-serif;text-anchor:middle;fill:#111;stroke:#111;stroke-width:0.12" textLength="19.00" lengthAdjust="spacingAndGlyphs" x="466.728089" y="404.638438" transform="rotate(-0 466.728089 404.638438)">120</text>
</g>
</g>
<g id="sxtick_5">
<g id="sline2d_9">
<path d="M 579.214118 390.04
L 579.214118 26.88
" clip-path="url(#sp0f57025803)" style="fill: none; stroke: #b0b0b0; stroke-opacity: 0.3; stroke-width: 0.8; stroke-linecap: square"/>
</g>
<g id="sline2d_10">
<g>
<use xlink:href="#smb63c25f85a" x="579.214118" y="390.04" style="stroke: #000000; stroke-width: 0.8"/>
</g>
</g>
<g id="stext_5">
<text style="font-size:10.3px;font-family:'Liberation Sans',sans-serif;text-anchor:middle;fill:#111;stroke:#111;stroke-width:0.12" textLength="18.88" lengthAdjust="spacingAndGlyphs" x="579.214118" y="404.638438" transform="rotate(-0 579.214118 404.638438)">140</text>
</g>
</g>
<g id="sxtick_6">
<g id="sline2d_11">
<path d="M 691.700146 390.04
L 691.700146 26.88
" clip-path="url(#sp0f57025803)" style="fill: none; stroke: #b0b0b0; stroke-opacity: 0.3; stroke-width: 0.8; stroke-linecap: square"/>
</g>
<g id="sline2d_12">
<g>
<use xlink:href="#smb63c25f85a" x="691.700146" y="390.04" style="stroke: #000000; stroke-width: 0.8"/>
</g>
</g>
<g id="stext_6">
<text style="font-size:10.3px;font-family:'Liberation Sans',sans-serif;text-anchor:middle;fill:#111;stroke:#111;stroke-width:0.12" textLength="19.00" lengthAdjust="spacingAndGlyphs" x="691.700146" y="404.638438" transform="rotate(-0 691.700146 404.638438)">160</text>
</g>
</g>
<g id="stext_7">
<g transform="translate(-0.8 0)"><text style="font-size:10.3px;font-family:'Liberation Sans',sans-serif;text-anchor:middle;fill:#111;stroke:#111;stroke-width:0.12" textLength="32.88" lengthAdjust="spacingAndGlyphs" x="380.035" y="418.316562" transform="rotate(-0 380.035 418.316562)">Values</text></g>
</g>
</g>
<g id="smatplotlib.axis_2">
<g id="sytick_1">
<g id="sline2d_13">
<path d="M 50.87 390.04
L 709.2 390.04
" clip-path="url(#sp0f57025803)" style="fill: none; stroke: #b0b0b0; stroke-opacity: 0.3; stroke-width: 0.8; stroke-linecap: square"/>
</g>
<g id="sline2d_14">
<defs>
<path id="smf5bebd6162" d="M 0 0
L -3.5 0
" style="stroke: #000000; stroke-width: 0.8"/>
</defs>
<g>
<use xlink:href="#smf5bebd6162" x="50.87" y="390.04" style="stroke: #000000; stroke-width: 0.8"/>
</g>
</g>
<g id="stext_8">
<text style="font-size:10.3px;font-family:'Liberation Sans',sans-serif;text-anchor:end;fill:#111;stroke:#111;stroke-width:0.12" textLength="6.25" lengthAdjust="spacingAndGlyphs" x="43.87" y="393.839219" transform="rotate(-0 43.87 393.839219)">0</text>
</g>
</g>
<g id="sytick_2">
<g id="sline2d_15">
<path d="M 50.87 322.223007
L 709.2 322.223007
" clip-path="url(#sp0f57025803)" style="fill: none; stroke: #b0b0b0; stroke-opacity: 0.3; stroke-width: 0.8; stroke-linecap: square"/>
</g>
<g id="sline2d_16">
<g>
<use xlink:href="#smf5bebd6162" x="50.87" y="322.223007" style="stroke: #000000; stroke-width: 0.8"/>
</g>
</g>
<g id="stext_9">
<text style="font-size:10.3px;font-family:'Liberation Sans',sans-serif;text-anchor:end;fill:#111;stroke:#111;stroke-width:0.12" textLength="12.62" lengthAdjust="spacingAndGlyphs" x="43.87" y="326.022225" transform="rotate(-0 43.87 326.022225)">20</text>
</g>
</g>
<g id="sytick_3">
<g id="sline2d_17">
<path d="M 50.87 254.406013
L 709.2 254.406013
" clip-path="url(#sp0f57025803)" style="fill: none; stroke: #b0b0b0; stroke-opacity: 0.3; stroke-width: 0.8; stroke-linecap: square"/>
</g>
<g id="sline2d_18">
<g>
<use xlink:href="#smf5bebd6162" x="50.87" y="254.406013" style="stroke: #000000; stroke-width: 0.8"/>
</g>
</g>
<g id="stext_10">
<text style="font-size:10.3px;font-family:'Liberation Sans',sans-serif;text-anchor:end;fill:#111;stroke:#111;stroke-width:0.12" textLength="12.50" lengthAdjust="spacingAndGlyphs" x="43.87" y="258.205232" transform="rotate(-0 43.87 258.205232)">40</text>
</g>
</g>
<g id="sytick_4">
<g id="sline2d_19">
<path d="M 50.87 186.58902
L 709.2 186.58902
" clip-path="url(#sp0f57025803)" style="fill: none; stroke: #b0b0b0; stroke-opacity: 0.3; stroke-width: 0.8; stroke-linecap: square"/>
</g>
<g id="sline2d_20">
<g>
<use xlink:href="#smf5bebd6162" x="50.87" y="186.58902" style="stroke: #000000; stroke-width: 0.8"/>
</g>
</g>
<g id="stext_11">
<text style="font-size:10.3px;font-family:'Liberation Sans',sans-serif;text-anchor:end;fill:#111;stroke:#111;stroke-width:0.12" textLength="12.62" lengthAdjust="spacingAndGlyphs" x="43.87" y="190.388238" transform="rotate(-0 43.87 190.388238)">60</text>
</g>
</g>
<g id="sytick_5">
<g id="sline2d_21">
<path d="M 50.87 118.772026
L 709.2 118.772026
" clip-path="url(#sp0f57025803)" style="fill: none; stroke: #b0b0b0; stroke-opacity: 0.3; stroke-width: 0.8; stroke-linecap: square"/>
</g>
<g id="sline2d_22">
<g>
<use xlink:href="#smf5bebd6162" x="50.87" y="118.772026" style="stroke: #000000; stroke-width: 0.8"/>
</g>
</g>
<g id="stext_12">
<text style="font-size:10.3px;font-family:'Liberation Sans',sans-serif;text-anchor:end;fill:#111;stroke:#111;stroke-width:0.12" textLength="12.50" lengthAdjust="spacingAndGlyphs" x="43.87" y="122.571245" transform="rotate(-0 43.87 122.571245)">80</text>
</g>
</g>
<g id="sytick_6">
<g id="sline2d_23">
<path d="M 50.87 50.955033
L 709.2 50.955033
" clip-path="url(#sp0f57025803)" style="fill: none; stroke: #b0b0b0; stroke-opacity: 0.3; stroke-width: 0.8; stroke-linecap: square"/>
</g>
<g id="sline2d_24">
<g>
<use xlink:href="#smf5bebd6162" x="50.87" y="50.955033" style="stroke: #000000; stroke-width: 0.8"/>
</g>
</g>
<g id="stext_13">
<text style="font-size:10.3px;font-family:'Liberation Sans',sans-serif;text-anchor:end;fill:#111;stroke:#111;stroke-width:0.12" textLength="18.88" lengthAdjust="spacingAndGlyphs" x="43.87" y="54.754251" transform="rotate(-0 43.87 54.754251)">100</text>
</g>
</g>
<g id="stext_14">
<g transform="translate(0 1.3)"><text style="font-size:10.3px;font-family:'Liberation Sans',sans-serif;text-anchor:middle;fill:#111;stroke:#111;stroke-width:0.12" textLength="51.62" lengthAdjust="spacingAndGlyphs" x="18.702813" y="208.46" transform="rotate(-90 18.702813 208.46)">Frequency</text></g>
</g>
</g>
<g id="sline2d_25">
<path d="M 355.872999 390.04
L 355.872999 26.88
" clip-path="url(#sp0f57025803)" style="fill: none; stroke-dasharray: 7.4,3.2; stroke-dashoffset: 0; stroke: #ff0000; stroke-width: 2"/>
</g>
<g id="sline2d_26">
<path d="M 438.442768 390.04
L 438.442768 26.88
" clip-path="url(#sp0f57025803)" style="fill: none; stroke-dasharray: 5.55,2.4; stroke-dashoffset: 0; stroke: #ffa500; stroke-opacity: 0.7; stroke-width: 1.5"/>
</g>
<g id="sline2d_27">
<path d="M 273.303231 390.04
L 273.303231 26.88
" clip-path="url(#sp0f57025803)" style="fill: none; stroke-dasharray: 5.55,2.4; stroke-dashoffset: 0; stroke: #ffa500; stroke-opacity: 0.7; stroke-width: 1.5"/>
</g>
<g id="spatch_33">
<path d="M 50.87 390.04
L 50.87 26.88
" style="fill: none; stroke: #000000; stroke-width: 0.8; stroke-linejoin: miter; stroke-linecap: square"/>
</g>
<g id="spatch_34">
<path d="M 709.2 390.04
L 709.2 26.88
" style="fill: none; stroke: #000000; stroke-width: 0.8; stroke-linejoin: miter; stroke-linecap: square"/>
</g>
<g id="spatch_35">
<path d="M 50.87 390.04
L 709.2 390.04
" style="fill: none; stroke: #000000; stroke-width: 0.8; stroke-linejoin: miter; stroke-linecap: square"/>
</g>
<g id="spatch_36">
<path d="M 50.87 26.88
L 709.2 26.88
" style="fill: none; stroke: #000000; stroke-width: 0.8; stroke-linejoin: miter; stroke-linecap: square"/>
</g>
<g id="stext_15">
<text style="font-size:12.36px;font-family:'Liberation Sans',sans-serif;text-anchor:middle;fill:#111;stroke:#111;stroke-width:0.12" textLength="164.50" lengthAdjust="spacingAndGlyphs" x="380.035" y="20.88" transform="rotate(-0 380.035 20.88)">Histogram of Random Data</text>
</g>
<g id="slegend_1">
<g id="spatch_37">
<path d="M 590.585938 79.8
L 702.2 79.8
Q 704.2 79.8 704.2 77.8
L 704.2 34.2
Q 704.2 32.2 702.2 32.2
L 590.585938 32.2
Q 588.585938 32.2 588.585938 34.2
L 588.585938 77.8
Q 588.585938 79.8 590.585938 79.8
z
" style="fill: #ffffff; opacity: 0.8; stroke: #cccccc; stroke-linejoin: miter"/>
</g>
<g id="sline2d_28" transform="translate(0 0.64)">
<path d="M 592.585938 39.978437
L 602.585938 39.978437
L 612.585938 39.978437
" style="fill: none; stroke-dasharray: 7.4,3.2; stroke-dashoffset: 0; stroke: #ff0000; stroke-width: 2"/>
</g>
<g id="stext_16" transform="translate(0 0.64)">
<text style="font-size:10.3px;font-family:'Liberation Sans',sans-serif;text-anchor:start;fill:#111;stroke:#111;stroke-width:0.12" textLength="68.50" lengthAdjust="spacingAndGlyphs" x="620.585938" y="43.478437" transform="rotate(-0 620.585938 43.478437)">Mean: 100.29</text>
</g>
<g id="sline2d_29" transform="translate(0 0.94)">
<path d="M 592.585938 54.656563
L 602.585938 54.656563
L 612.585938 54.656563
" style="fill: none; stroke-dasharray: 5.55,2.4; stroke-dashoffset: 0; stroke: #ffa500; stroke-opacity: 0.7; stroke-width: 1.5"/>
</g>
<g id="stext_17" transform="translate(0 0.94)">
<text style="font-size:10.3px;font-family:'Liberation Sans',sans-serif;text-anchor:start;fill:#111;stroke:#111;stroke-width:0.12" textLength="79.25" lengthAdjust="spacingAndGlyphs" x="620.585938" y="58.156563" transform="rotate(-0 620.585938 58.156563)">+1 STD: 114.97</text>
</g>
<g id="sline2d_30" transform="translate(0 1.24)">
<path d="M 592.585938 69.334687
L 602.585938 69.334687
L 612.585938 69.334687
" style="fill: none; stroke-dasharray: 5.55,2.4; stroke-dashoffset: 0; stroke: #ffa500; stroke-opacity: 0.7; stroke-width: 1.5"/>
</g>
<g id="stext_18" transform="translate(0 1.24)">
<text style="font-size:10.3px;font-family:'Liberation Sans',sans-serif;text-anchor:start;fill:#111;stroke:#111;stroke-width:0.12" textLength="68.12" lengthAdjust="spacingAndGlyphs" x="620.585938" y="72.834687" transform="rotate(-0 620.585938 72.834687)">-1 STD: 85.61</text>
</g>
</g>
</g>
</g>
<defs>
<clipPath id="sp0f57025803">
<rect x="50.87" y="26.88" width="658.33" height="363.16"/>
</clipPath>
</defs>
</svg>

  </div>
</div>
<div class="abs" style="left:1299px;top:1092px;width:704px;height:1px;background:#e2e2e2"></div>
<!-- input -->
<div class="abs" style="left:1316.5px;top:1110.5px;width:668px;height:241px;border:1px solid #dadada;border-radius:11px;background:#fff"></div>
<div class="abs" style="left:1335px;top:1130px;font-size:23px;line-height:26px;color:#6e6e6e">Describe the changes you want to make...</div>
<div class="abs" style="left:1334.7px;top:1302.5px;width:63.3px;height:26.8px;border-radius:13px;border:1px solid #e2e2e2;background:#fff;box-shadow:0 1px 2px rgba(0,0,0,0.06)"></div>
<div class="abs" style="left:1341.5px;top:1307.2px;font-size:17px;line-height:20px;color:#1a1a1a">Edit</div>
<svg class="abs" style="left:1379px;top:1310px" width="12" height="10" viewBox="0 0 12 10"><path d="M2 7L6 3L10 7" stroke="#888" stroke-width="1.3" fill="none"/></svg>
<div class="abs" style="left:1410.8px;top:1302.5px;width:167.2px;height:26.8px;border-radius:13px;border:1px solid #e2e2e2;background:#fff;box-shadow:0 1px 2px rgba(0,0,0,0.06)"></div>
<div class="abs" style="left:1417.5px;top:1307.2px;font-size:17.5px;line-height:20px;color:#1a1a1a;letter-spacing:0.6px">claude-4-sonnet</div>
<svg class="abs" style="left:1559px;top:1310px" width="12" height="10" viewBox="0 0 12 10"><path d="M2 7L6 3L10 7" stroke="#888" stroke-width="1.3" fill="none"/></svg>
<div class="abs" style="left:1873.2px;top:1299.3px;width:93px;height:33.7px;border-radius:17px;background:#8a8a8c"></div>
<div class="abs" style="left:1885px;top:1306.5px;font-size:17.6px;line-height:20px;font-weight:bold;color:#fff;letter-spacing:-0.35px">Send</div>
<svg class="abs" style="left:1933px;top:1306px" width="22" height="20" viewBox="0 0 22 20"><g stroke="#fff" stroke-width="1.8" fill="none" stroke-linecap="round" stroke-linejoin="round"><path d="M18.5 2v7.5a3 3 0 0 1-3 3H4"/><path d="M8 8l-4.5 4.5L8 17"/></g></svg>

<div class="abs" style="left:2002px;top:0;width:46px;height:1363px;background:#eeeeee;border-left:1.7px solid #bbbbbb"></div>
<div class="abs" style="left:2003px;top:282px;width:45px;height:76px;background:#fff;border-top:1px solid #c8c8c8;border-bottom:1px solid #c8c8c8"></div>
<svg class="abs" style="left:2003px;top:0" width="45" height="130" viewBox="2003 0 45 130">
  <g fill="#616161">
    <path d="M2019.6 17.2h1.8l0.4 1.6 1.1 0.5 1.4-0.9 1.3 1.3-0.9 1.4 0.5 1.1 1.6 0.4v1.8l-1.6 0.4-0.5 1.1 0.9 1.4-1.3 1.3-1.4-0.9-1.1 0.5-0.4 1.6h-1.8l-0.4-1.6-1.1-0.5-1.4 0.9-1.3-1.3 0.9-1.4-0.5-1.1-1.6-0.4v-1.8l1.6-0.4 0.5-1.1-0.9-1.4 1.3-1.3 1.4 0.9 1.1-0.5z"/>
    <path d="M2028.6 24.9h2.8l0.6 2.4 1.7 0.7 2.1-1.3 2 2-1.3 2.1 0.7 1.7 2.4 0.6v2.8l-2.4 0.6-0.7 1.7 1.3 2.1-2 2-2.1-1.3-1.7 0.7-0.6 2.4h-2.8l-0.6-2.4-1.7-0.7-2.1 1.3-2-2 1.3-2.1-0.7-1.7-2.4-0.6v-2.8l2.4-0.6 0.7-1.7-1.3-2.1 2-2 2.1 1.3 1.7-0.7z"/>
  </g>
  <circle cx="2020.5" cy="22.5" r="1.9" fill="#eeeeee"/>
  <circle cx="2030" cy="33.3" r="3" fill="#eeeeee"/>
  <path transform="translate(2012.46 90.81) scale(1.17)" fill="#616161" d="M20 8h-2.81c-.45-.78-1.07-1.45-1.82-1.96L17 4.41 15.59 3l-2.17 2.17C12.96 5.06 12.49 5 12 5c-.49 0-.96.06-1.41.17L8.41 3 7 4.41l1.62 1.63C7.880 6.55 7.26 7.22 6.81 8H4v2h2.09c-.05.33-.09.66-.09 1v1H4v2h2v1c0 .34.04.67.09 1H4v2h2.81c1.04 1.79 2.97 3 5.19 3s4.15-1.21 5.19-3H20v-2h-2.09c.05-.33.09-.66.09-1v-1h2v-2h-2v-1c0-.34-.04-.67-.09-1H20V8zm-6 8h-4v-2h4v2zm0-4h-4v-2h4v2z"/>
</svg>
<div class="abs" style="left:2017px;top:166px;width:19px;height:93px;overflow:visible">
  <div style="position:absolute;left:0;top:0;transform-origin:0 0;transform:translate(19px,0) rotate(90deg);font-size:19px;line-height:19px;color:#616161;white-space:nowrap">Virtual Cell</div>
</div>
<svg class="abs" style="left:2011.9px;top:305.7px" width="30" height="30" viewBox="0 0 30 30">
  <g stroke="#111" stroke-width="2" fill="none" stroke-linejoin="round" stroke-linecap="round">
    <path d="M3.7 26.4L10.26 12.53A5.8 5.8 0 1 1 17.79 20.33Z"/>
    <path d="M18.8 2.6C21 4.6 21.4 8 18.8 10.2C16.2 8 16.6 4.6 18.8 2.6Z"/>
    <path d="M20.3 11.5C22.3 9.2 26 9.2 28.2 11.5C26 13.8 22.3 13.8 20.3 11.5Z"/>
    <path d="M9.8 15.2L11.4 17M16.3 16.9Q17.6 16 18 14.4"/>
  </g>
</svg>
</body></html>
